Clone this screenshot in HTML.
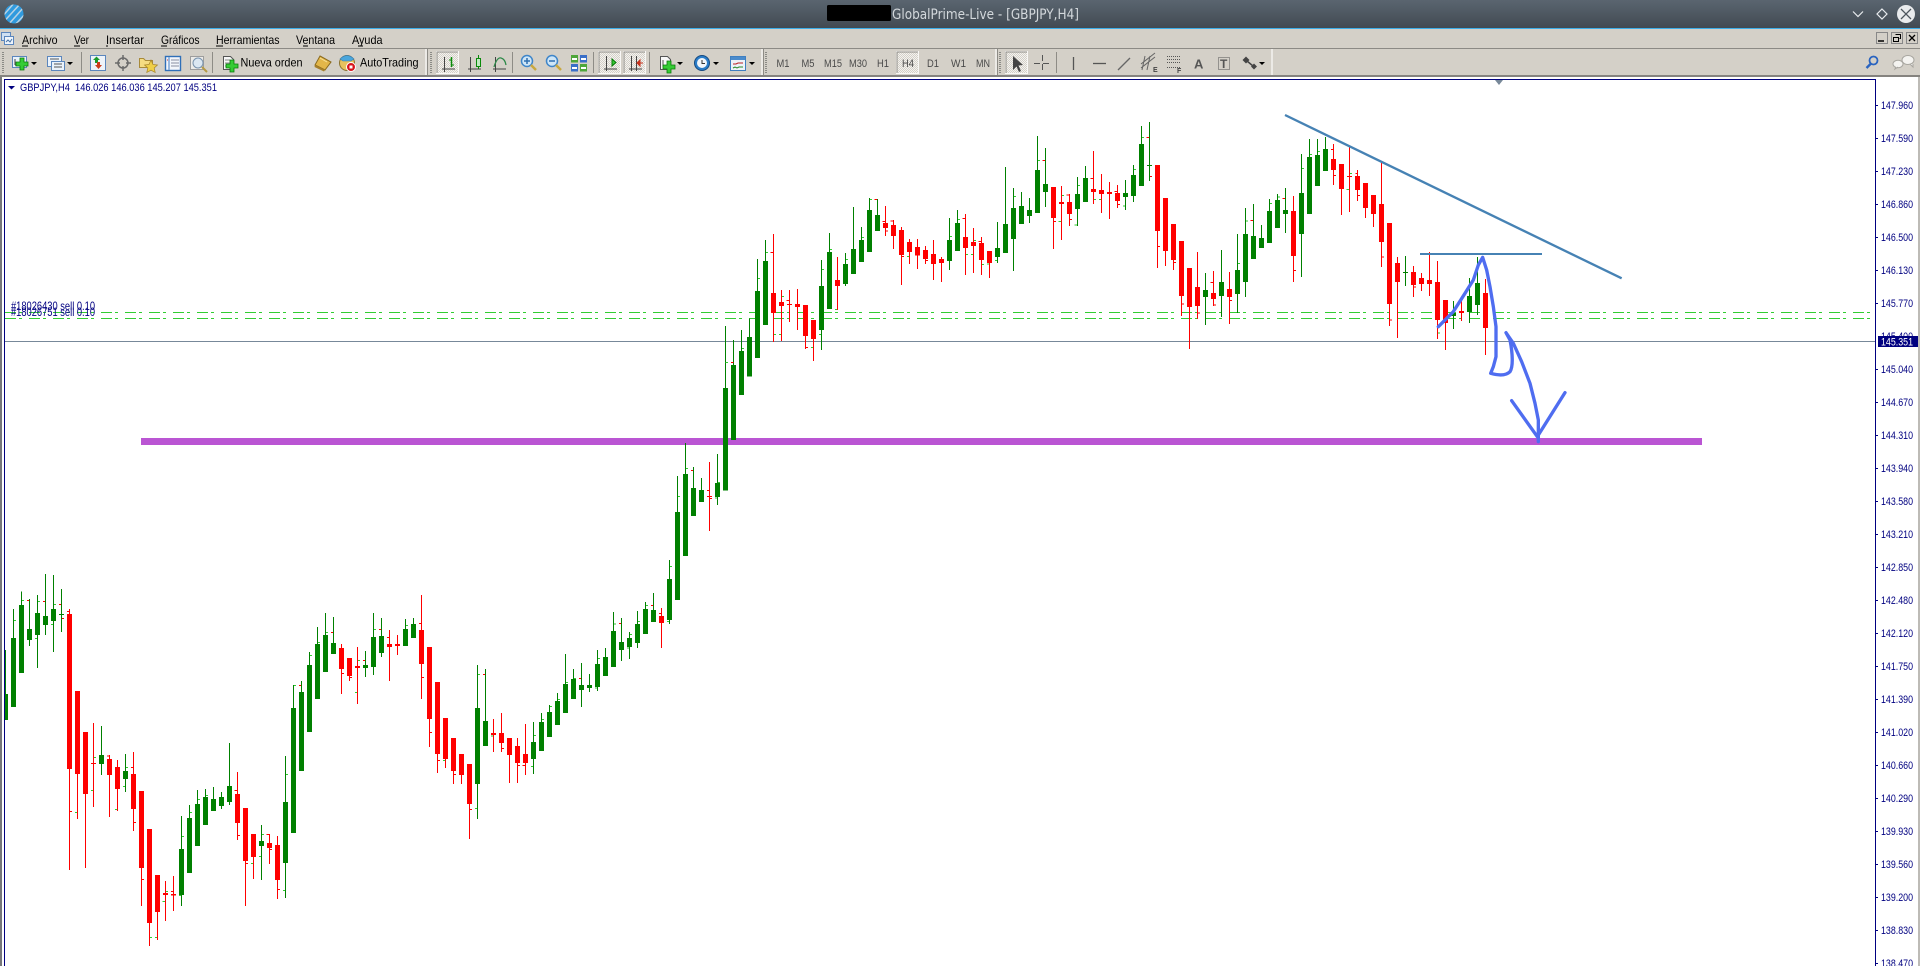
<!DOCTYPE html>
<html><head><meta charset="utf-8"><title>GlobalPrime-Live - [GBPJPY,H4]</title>
<style>
html,body{margin:0;padding:0;background:#fff;width:1920px;height:966px;overflow:hidden}
svg{display:block}
text{font-family:"Liberation Sans",sans-serif}
.m{font-size:12px;fill:#000}
.t{font-size:11px;fill:#4a4a4a}
.a{font-size:11px;fill:#000080}
.l{font-size:11px;fill:#000080}
.o{font-size:12px;fill:#000080}
</style></head><body>
<svg xmlns="http://www.w3.org/2000/svg" width="1920" height="966" viewBox="0 0 1920 966">
<defs>
<linearGradient id="tb" x1="0" y1="0" x2="0" y2="1"><stop offset="0" stop-color="#5a6570"/><stop offset="1" stop-color="#424a52"/></linearGradient>
<clipPath id="cc"><rect x="5" y="80" width="1870" height="886"/></clipPath>
<clipPath id="lg"><circle cx="14" cy="14" r="9.5"/></clipPath>
<path id="plus" d="M-2-6H2V-2H6V2H2V6H-2V2H-6V-2H-2Z" fill="#35cc35" stroke="#0b7a0b" stroke-width=".8"/>
<path id="dd" d="M-3 0H3L0 3Z" fill="#000"/>
<pattern id="dot" width="2" height="2" patternUnits="userSpaceOnUse"><rect width="2" height="2" fill="#f4f3f0"/><rect width="1" height="1" fill="#d4d0c8"/><rect x="1" y="1" width="1" height="1" fill="#d4d0c8"/></pattern>
</defs>

<!-- title bar -->
<rect width="1920" height="28" fill="url(#tb)"/>
<rect y="28" width="1920" height="1" fill="#3daee9"/>
<g clip-path="url(#lg)"><rect x="4" y="4" width="20" height="20" fill="#2f9ade"/>
<path d="M2 17L15 2M4.500 21L20 4M8 25L24 7M13 27L27 12" stroke="#b6d2e4" stroke-width="1.500" fill="none"/></g>
<rect x="827" y="5" width="64" height="16" rx="1.5" fill="#000"/>
<text x="892" y="19" font-size="14" fill="#d3d8dc" textLength="187" lengthAdjust="spacingAndGlyphs" style="font-family:'DejaVu Sans',sans-serif">GlobalPrime-Live - [GBPJPY,H4]</text>
<path d="M1853 11.5L1858 16.5L1863 11.5" stroke="#e8ebee" stroke-width="1.2" fill="none"/>
<path d="M1882 9L1887 14L1882 19L1877 14Z" stroke="#e8ebee" stroke-width="1.2" fill="none"/>
<circle cx="1906" cy="14" r="9" fill="#e9ebed"/>
<path d="M1901 9L1911 19M1911 9L1901 19" stroke="#4c555d" stroke-width="1.3"/>

<!-- menu -->
<rect y="29" width="1920" height="48" fill="#d4d0c8"/>
<g>
<rect x="1.500" y="32.500" width="9" height="8" fill="#cfe0f2" stroke="#5b86bd"/>
<rect x="4.500" y="36.500" width="9" height="8" fill="#eef4fb" stroke="#5b86bd"/>
<path d="M6 42l2-2 2 2 2-3" stroke="#4472a8" fill="none"/>
</g>
<text class="m" x="22" y="44" textLength="35.500" lengthAdjust="spacingAndGlyphs">Archivo</text>
<text class="m" x="74" y="44" textLength="15" lengthAdjust="spacingAndGlyphs">Ver</text>
<text class="m" x="106" y="44" textLength="38" lengthAdjust="spacingAndGlyphs">Insertar</text>
<text class="m" x="161" y="44" textLength="38.500" lengthAdjust="spacingAndGlyphs">Gráficos</text>
<text class="m" x="216" y="44" textLength="63.500" lengthAdjust="spacingAndGlyphs">Herramientas</text>
<text class="m" x="296" y="44" textLength="39" lengthAdjust="spacingAndGlyphs">Ventana</text>
<text class="m" x="352" y="44" textLength="30.500" lengthAdjust="spacingAndGlyphs">Ayuda</text>
<path d="M22 46h6M74 46h6M106 46h2M161 46h6M216 46h7M303 46h5M358 46h5" stroke="#000" stroke-width="1" fill="none"/>
<!-- mdi buttons -->
<g>
<rect x="1876.500" y="32.500" width="11" height="11" fill="#d4d0c8" stroke="#888"/><path d="M1878 41h6" stroke="#000" stroke-width="1.500"/>
<rect x="1891.500" y="32.500" width="11" height="11" fill="#d4d0c8" stroke="#888"/><path d="M1895.500 34.500h5v4h-1M1893.500 37.500h5v4h-5z" stroke="#000" fill="none"/>
<rect x="1906.500" y="32.500" width="11" height="11" fill="#d4d0c8" stroke="#888"/><path d="M1909 35l6 6M1915 35l-6 6" stroke="#000" stroke-width="1.300"/>
</g>

<!-- toolbar -->
<rect y="48" width="1920" height="1" fill="#8c8a85"/>
<rect y="75" width="1920" height="2" fill="#85837f"/>
<rect y="77" width="1920" height="2" fill="#fff"/>
<path d="M3 52V73" stroke="#8a8a85" stroke-width="2" stroke-dasharray="1 1"/>
<path d="M431 52V73M766 52V73M1000 52V73" stroke="#8a8a85" stroke-width="2" stroke-dasharray="1 1"/>
<path d="M426 49V75M762 49V75M996 49V75M1272 49V75" stroke="#f4f3f0" stroke-width="1.500"/>
<path d="M427.500 49V75M763.500 49V75M997.500 49V75" stroke="#8e8c86" stroke-width="1"/>
<path d="M81.500 52V73M212.500 52V73M512.500 52V73M593.500 52V73M649.500 52V73M1056.500 52V73" stroke="#8e8c86"/>

<!-- pressed buttons -->
<g fill="url(#dot)" stroke="#f9f8f6">
<rect x="436.500" y="51.500" width="22" height="22"/><rect x="598.500" y="51.500" width="22" height="22"/><rect x="623.500" y="51.500" width="22" height="22"/><rect x="896.500" y="51.500" width="22" height="22"/><rect x="1005.500" y="51.500" width="22" height="22"/>
</g>
<path d="M437 73V52H458M599 73V52H620M624 73V52H645M897 73V52H918M1006 73V52H1027" stroke="#8e8c86" fill="none"/>

<!-- icon: new chart -->
<rect x="12.500" y="56.500" width="14" height="11" fill="#eaf2fb" stroke="#5b86bd"/><path d="M15 59v6M15 65h7" stroke="#444"/><use href="#plus" x="22" y="64"/>
<use href="#dd" x="34" y="62"/>
<!-- profiles -->
<rect x="47.500" y="56.500" width="14" height="10" fill="#eaf2fb" stroke="#5b86bd"/><rect x="51.500" y="61.500" width="13" height="9" fill="#eaf2fb" stroke="#5b86bd"/><path d="M50 59h9M54 64h8M54 67h8" stroke="#555"/>
<use href="#dd" x="70" y="62"/>
<!-- market watch -->
<rect x="90.500" y="55.500" width="15" height="15" fill="#eef3f9" stroke="#5b86bd"/><path d="M93 60l3.500-3.500 3.500 3.500h-2v3h-3v-3z" fill="#1a9a2a"/><path d="M95 65l3.500 4 3.500-4h-2v-3h-3v3z" fill="#cc3a1a"/>
<!-- navigator crosshair -->
<circle cx="123" cy="63" r="5" fill="none" stroke="#6a6a6a" stroke-width="1.500"/><path d="M123 55v5M123 66v5M115 63h5M126 63h5" stroke="#6a6a6a" stroke-width="1.500"/>
<!-- favourites folder -->
<path d="M139.500 58.500v9h13v-7h-7l-2-2z" fill="#f5dc82" stroke="#a88a3a"/><path d="M151 60l2 4.500 4.500.5-3.300 3 1 4.500-4.200-2.300-4.200 2.300 1-4.500-3.300-3 4.500-.5z" fill="#efcf49" stroke="#a6842a" stroke-width=".7"/>
<!-- terminal -->
<rect x="165.500" y="56.500" width="15" height="14" fill="#f3f6fb" stroke="#2f6fb8" stroke-width="1.400"/><path d="M169 57v13" stroke="#7aa4d6" stroke-width="1.500"/><path d="M171 60h8M171 63h8M171 66h8" stroke="#8a8fa0"/><path d="M167 60h1" stroke="#c33"/>
<!-- tester -->
<rect x="190.500" y="56.500" width="13" height="13" fill="#ecebe8" stroke="#9d9d9d"/><circle cx="198" cy="63" r="5" fill="#dbe7f2" stroke="#7892ad"/><path d="M202 67l5 5" stroke="#b59a46" stroke-width="2"/>
<!-- nueva orden -->
<path d="M223.500 56.500h7l3 3v10h-10z" fill="#f8f8f8" stroke="#555"/><path d="M225 60h5M225 63h6M225 66h4" stroke="#888"/><use href="#plus" x="232" y="66"/>
<text x="240.500" y="66.500" font-size="12" fill="#000" textLength="62" lengthAdjust="spacingAndGlyphs">Nueva orden</text>
<!-- metaeditor -->
<path d="M320 56L331 62L325 70L315 65Z" fill="#e3b649" stroke="#8a6a1e"/><path d="M315 65L325 70L324 71.500L314.500 67Z" fill="#a77f2a"/><path d="M320 58L327 62" stroke="#f7e19a"/>
<!-- autotrading -->
<circle cx="347" cy="63" r="7.500" fill="#e8c25d" stroke="#8b7330"/><path d="M340 59q7-7 14 0l-3 2h-8z" fill="#4aa6dc" stroke="#3a7fb0" stroke-width=".6"/><circle cx="351" cy="67" r="4.500" fill="#d8141c" stroke="#fff"/><rect x="349.500" y="65.500" width="3" height="3" fill="#fff"/>
<text x="360" y="66.500" font-size="12" fill="#000" textLength="58.500" lengthAdjust="spacingAndGlyphs">AutoTrading</text>

<!-- chart type icons -->
<g stroke="#444" fill="none">
<path d="M442 69h13M444.500 57v15"/>
<path d="M451.500 57v10" stroke="#0a8a0a" stroke-width="1.500"/><path d="M449 60h3M451 65h3" stroke="#0a8a0a"/>
<path d="M468 69h13M470.500 57v15"/>
<path d="M478.500 55v4M478.500 66v3" stroke="#0a8a0a"/><rect x="476.500" y="58.500" width="4" height="8" fill="#bfe9bf" stroke="#0a8a0a"/>
<path d="M493 69h13M495.500 57v15"/>
<path d="M494 67q3-10 7-9t5 7" stroke="#2f8a4a" stroke-width="1.300"/>
<path d="M604 69h13M606.500 56v15"/><path d="M612 59v7l4-3.500z" fill="#34c934" stroke="#0a7a0a"/>
<path d="M629 69h13M631.500 56v15M636.500 56v15"/><path d="M643 63h-3M640 60l-3 3 3 3z" fill="#c8321c" stroke="#c8321c"/>
</g>
<!-- zoom icons -->
<g>
<circle cx="527" cy="61" r="5.500" fill="#cfe6f7" stroke="#3e85c9" stroke-width="1.500"/><path d="M524 61h6M527 58v6" stroke="#2e6fb0" stroke-width="1.500"/><path d="M531 65l5 5" stroke="#c9a83f" stroke-width="2.500"/>
<circle cx="552" cy="61" r="5.500" fill="#cfe6f7" stroke="#3e85c9" stroke-width="1.500"/><path d="M549 61h6" stroke="#2e6fb0" stroke-width="1.500"/><path d="M556 65l5 5" stroke="#c9a83f" stroke-width="2.500"/>
<rect x="571" y="55" width="7" height="7.500" fill="#4ea63a"/><rect x="580" y="55" width="7" height="7.500" fill="#3a6fc8"/><rect x="571" y="64" width="7" height="7.500" fill="#3a6fc8"/><rect x="580" y="64" width="7" height="7.500" fill="#4ea63a"/>
<path d="M572 59h5M581 59h5M572 68h5M581 68h5" stroke="#fff" stroke-width="2"/>
</g>
<!-- indicators / clock / templates -->
<path d="M660.500 56.500h7l3 3v10h-10z" fill="#f8f8f8" stroke="#555"/><path d="M663 60v6h5" stroke="#555" fill="none"/><use href="#plus" x="669" y="67"/><use href="#dd" x="680" y="62"/>
<circle cx="702" cy="63" r="7.500" fill="#2a7cc8" stroke="#164a80"/><circle cx="702" cy="63" r="5" fill="#f2f6fa"/><path d="M702 60v3.500h3" stroke="#333" fill="none"/><use href="#dd" x="716" y="62"/>
<rect x="730.500" y="56.500" width="15" height="14" fill="#eef3f9" stroke="#3f7fc0"/><rect x="731" y="57" width="14" height="3" fill="#4a8bcc"/><path d="M733 64h3l2-1h5" stroke="#b22" fill="none"/><path d="M733 68l2-1 2 1 2-1h4" stroke="#2a8a2a" fill="none"/><use href="#dd" x="752" y="62"/>

<!-- timeframes -->
<text class="t" x="776.500" y="67" textLength="13" lengthAdjust="spacingAndGlyphs">M1</text>
<text class="t" x="801.500" y="67" textLength="13" lengthAdjust="spacingAndGlyphs">M5</text>
<text class="t" x="824" y="67" textLength="18" lengthAdjust="spacingAndGlyphs">M15</text>
<text class="t" x="849" y="67" textLength="18" lengthAdjust="spacingAndGlyphs">M30</text>
<text class="t" x="877" y="67" textLength="12" lengthAdjust="spacingAndGlyphs">H1</text>
<text class="t" x="902" y="67" textLength="12" lengthAdjust="spacingAndGlyphs">H4</text>
<text class="t" x="927" y="67" textLength="12" lengthAdjust="spacingAndGlyphs">D1</text>
<text class="t" x="951" y="67" textLength="15" lengthAdjust="spacingAndGlyphs">W1</text>
<text class="t" x="976" y="67" textLength="14" lengthAdjust="spacingAndGlyphs">MN</text>

<!-- drawing tools -->
<path d="M1013 56L1013 70L1016.500 66.500L1019 72L1021 71L1018.500 65.500L1023 65Z" fill="#444"/>
<path d="M1042.500 55v16M1034 63.500h17" stroke="#555" stroke-dasharray="6 3"/>
<path d="M1073.500 57v13" stroke="#555" stroke-width="1.300"/>
<path d="M1093 63.500h13" stroke="#555" stroke-width="1.300"/>
<path d="M1118 70L1130 58" stroke="#666" stroke-width="1.300"/>
<path d="M1141 68l14-11M1141 64l14-11M1145 56l-3 14M1150 56l-3 14" stroke="#666" fill="none"/>
<text x="1153" y="72" font-size="7" font-weight="bold" fill="#444">E</text>
<path d="M1167 56.500h13M1167 59.500h13M1167 62.500h13M1167 67.500h13" stroke="#555" stroke-dasharray="1 1"/>
<text x="1177" y="73" font-size="7" font-weight="bold" fill="#444">F</text>
<text x="1194" y="68.500" font-size="13" font-weight="bold" fill="#555">A</text>
<rect x="1218.500" y="57.500" width="11" height="12" fill="none" stroke="#555" stroke-dasharray="1 1"/>
<text x="1220" y="68" font-size="12" font-weight="bold" fill="#555">T</text>
<path d="M1242.500 60l3.500-3.500 3.500 3.500-3.500 3.500zM1251 66.500l3-3 3 3-3 3z" fill="#444"/><path d="M1247 61l6 5" stroke="#444" stroke-width="1.500"/>
<use href="#dd" x="1262" y="62"/>
<!-- search / chat -->
<circle cx="1873.500" cy="60.500" r="4" fill="none" stroke="#2a64c0" stroke-width="1.800"/><path d="M1870.500 64l-4 4" stroke="#2a64c0" stroke-width="2.400"/>
<ellipse cx="1908" cy="60" rx="6" ry="4.500" fill="#f4f3f0" stroke="#a8a6a0"/><ellipse cx="1898" cy="64" rx="5" ry="3.800" fill="#f4f3f0" stroke="#a8a6a0"/><path d="M1910 64l3 3v-3M1896 67l-1 2 3-2" fill="#f4f3f0" stroke="#a8a6a0"/>

<!-- chart frame -->
<rect x="0" y="77" width="2" height="889" fill="#77777a"/>
<rect x="1918" y="77" width="2" height="889" fill="#bdbbb6"/>
<rect x="4" y="79" width="1" height="887" fill="#000080"/>
<rect x="4" y="79" width="1872" height="1" fill="#000080"/>
<rect x="1875" y="79" width="1" height="887" fill="#000080"/>
<path d="M1495 80h8l-4 5z" fill="#778899"/>
<path d="M8 86h7l-3.500 3.500z" fill="#000080"/>
<text class="l" x="20" y="91" textLength="197" lengthAdjust="spacingAndGlyphs" xml:space="preserve">GBPJPY,H4  146.026 146.036 145.207 145.351</text>

<g clip-path="url(#cc)">
<!-- horizontal lines -->
<path d="M5 312.500H1875M5 318.500H1875" stroke="#32cd32" stroke-width="1" stroke-dasharray="11 3 3 7" shape-rendering="crispEdges"/>
<path d="M5 341.500H1875" stroke="#778899" stroke-width="1" shape-rendering="crispEdges"/>
<rect x="141" y="438" width="1561" height="7" fill="#ba55d3"/>

<!-- candles A -->
<g transform="translate(0 560) scale(.33333)" fill="none" shape-rendering="crispEdges">
<path stroke="#32cd32" stroke-width="3" d="M64 121h8M40 181h8M112 124h8M105 235h7M160 133h8M153 193h7M280 592h8M273 691h7M376 622h8M369 679h7M345 748h7M225 757h7M496 994h8M488 1024h8M448 1132h8M465 1132h7M544 829h8M568 757h8M592 718h8M616 706h8M537 1006h7M856 643h8M849 991h7M880 376h8M976 217h8M952 247h8M928 286h8M1072 301h8M1065 397h7M1120 208h8M1216 196h8M784 823h8M777 889h7M753 910h7M1329 601h7M1432 343h8M1425 745h7"/>
<path stroke="#f00" stroke-width="3" d="M81 121h7M129 124h7M177 133h7M184 175h8M201 154h7M208 754h8M321 588h7M393 622h7M400 787h8M424 958h8M704 691h8M712 826h8M736 910h8M800 823h8M808 868h8M832 988h8M1024 340h8M1048 352h8M1089 301h7M993 217h7M897 376h7M1137 208h7M1161 232h7M1257 190h7M1264 352h8M1288 517h8M1312 601h8M1360 643h8M1408 748h8M513 994h7"/>
<path stroke="#008000" stroke-width="3" d="M16.500 270V480M40.500 147V441M64.500 94V339M88.500 117V258M112.500 105V324M136.500 42V225M160.500 45V276M184.500 87V216M304.500 498V645M376.500 582V696M544.500 768V1038M568.500 735V939M592.500 690V858M616.500 687V795M640.500 681V753M664.500 696V747M688.500 549V735M784.500 795V960M856.500 588V1014M880.500 375V819M904.500 363V633M928.500 276V516M952.500 201V417M976.500 159V336M1000.500 171V282M1096.500 273V351M1120.500 159V345M1144.500 174V291M1216.500 177V258M1240.500 174V234M1432.500 315V777"/>
<path stroke="#008000" stroke-width="15" d="M16.500 402V480M40.500 234V441M64.500 135V339M88.500 207V240M112.500 159V225M136.500 168V195M160.500 147V183M184.500 162V165M304.500 585V612M376.500 633V657M544.500 867V1005M568.500 774V939M592.500 732V858M616.500 711V795M640.500 717V753M664.500 711V738M688.500 678V726M784.500 843V858M856.500 726V909M880.500 444V819M904.500 396V633M928.500 315V516M952.500 252V417M976.500 225V336M1000.500 249V282M1096.500 315V324M1120.500 231V321M1144.500 228V279M1216.500 207V258M1240.500 192V234M1432.500 444V672"/>
<path stroke="#f00" stroke-width="3" d="M208.500 147V930M232.500 393V777M256.500 516V924M280.500 489V741M328.500 585V771M352.500 600V753M400.500 576V813M424.500 693V1038M448.500 807V1158M472.500 945V1140M496.500 963V1083M520.500 948V1053M712.500 636V840M736.500 744V1038M760.500 822V957M808.500 822V912M832.500 828V1017M1024.500 252V402M1048.500 294V363M1072.500 261V432M1168.500 210V363M1192.500 225V285M1264.500 105V417M1288.500 261V561M1312.500 366V639M1336.500 474V624M1360.500 534V672M1384.500 582V672M1408.500 612V837"/>
<path stroke="#f00" stroke-width="15" d="M208.500 162V627M232.500 393V642M256.500 516V702M280.500 609V612M328.500 597V645M352.500 621V687M400.500 642V747M424.500 693V924M448.500 807V1089M472.500 945V1056M496.500 999V1005M520.500 1002V1007M712.500 702V789M736.500 744V903M760.500 822V891M808.500 849V864M832.500 855V960M1024.500 264V327M1048.500 294V348M1072.500 318V324M1168.500 252V261M1192.500 252V258M1264.500 210V312M1288.500 261V477M1312.500 366V582M1336.500 474V597M1360.500 534V633M1384.500 582V645M1408.500 612V732"/>
</g>

<!-- candles B -->
<g transform="translate(440 420) scale(.33333)" fill="none" shape-rendering="crispEdges">
<path stroke="#32cd32" stroke-width="3" d="M153 948h7M280 946h8M304 898h8M328 859h8M352 838h8M376 787h8M400 775h8M465 804h7M472 715h8M520 612h8M561 684h7M568 643h8M592 604h8M616 556h8M681 604h7M688 439h8M712 229h8M736 145h8M825 234h7M832 187h8M273 1039h7"/>
<path stroke="#f00" stroke-width="3" d="M129 763h7M184 985h8M417 775h7M537 610h7M633 556h7M657 580h7M753 151h7M801 211h7M808 235h8M232 1036h8M248 1036h8"/>
<path stroke="#008000" stroke-width="3" d="M136.500 747V978M280.500 906V1062M304.500 879V993M328.500 855V951M352.500 819V915M376.500 702V879M400.500 747V837M424.500 729V861M448.500 762V816M472.500 690V813M496.500 684V768M520.500 576V741M544.500 594V723M568.500 636V717M592.500 573V684M616.500 546V642M640.500 519V606M688.500 420V612M712.500 168V540M736.500 69V408M760.500 141V288M784.500 174V246M832.500 102V255M856.500 -282V212M880.500 -240V60"/>
<path stroke="#008000" stroke-width="15" d="M136.500 903V978M280.500 966V1017M304.500 906V993M328.500 876V951M352.500 843V915M376.500 792V879M400.500 777V837M424.500 795V810M448.500 795V804M472.500 732V801M496.500 711V768M520.500 633V741M544.500 666V690M568.500 654V681M592.500 612V669M616.500 567V642M640.500 570V606M688.500 477V600M712.500 276V540M736.500 162V408M760.500 204V288M784.500 210V246M832.500 189V231M856.500 -96V212M880.500 -165V60"/>
<path stroke="#f00" stroke-width="3" d="M160.500 897V996M184.500 879V996M208.500 954V1089M232.500 954V1089M256.500 912V1065M664.500 564V684M808.500 126V333"/>
<path stroke="#f00" stroke-width="15" d="M160.500 939V945M184.500 939V969M208.500 954V1005M232.500 978V1029M256.500 1002V1029M664.500 588V609M808.500 228V231"/>
</g>

<!-- candles C -->
<g transform="translate(720 120) scale(.33333)" fill="none" shape-rendering="crispEdges">
<path stroke="#32cd32" stroke-width="3" d="M16 727h8M64 685h8M112 475h8M136 397h8M184 529h8M304 448h8M297 643h7M328 388h8M376 418h8M345 568h7M424 352h8M448 238h8M712 298h8M688 349h8M736 403h8M753 403h7M760 361h8M784 433h8M801 432h7M825 421h7M880 229h8M952 121h8M1024 226h8M1072 196h8M1016 304h8M1064 315h8M1120 238h8M1137 238h7M1240 148h8M1209 258h7M1264 52h8M273 682h7M160 643h8M177 643h7M561 409h7"/>
<path stroke="#f00" stroke-width="3" d="M33 727h7M152 397h8M200 541h8M256 682h8M464 238h8M488 304h8M496 333h8M512 303h8M544 409h8M616 421h8M728 295h8M776 364h8M968 121h8M1112 175h8M1184 214h8M1192 253h8M1048 298h8M1040 225h8M1000 304h8M1280 52h8M1288 169h8M1312 379h8M1360 427h8M1384 552h8"/>
<path stroke="#008000" stroke-width="3" d="M64.500 630V825M88.500 595V770M112.500 417V714M136.500 360V615M304.500 420V690M328.500 339V567M376.500 399V498M400.500 261V462M424.500 321V426M448.500 234V396M472.500 237V333M688.500 294V450M712.500 270V393M832.500 306V429M856.500 141V399M880.500 204V453M904.500 216V312M928.500 234V309M952.500 48V279M976.500 84V261M1072.500 171V318M1096.500 138V246M1216.500 180V270M1240.500 135V246M1264.500 18V198M1288.500 6V183"/>
<path stroke="#008000" stroke-width="15" d="M64.500 693V825M88.500 651V770M112.500 513V714M136.500 423V615M304.500 498V630M328.500 396V567M376.500 432V492M400.500 387V462M424.500 360V426M448.500 270V396M472.500 285V333M688.500 360V423M712.500 309V393M832.500 384V411M856.500 312V399M880.500 264V357M904.500 258V312M928.500 270V288M952.500 150V279M976.500 192V216M1072.500 222V267M1096.500 174V246M1216.500 219V231M1240.500 165V228M1264.500 72V198M1288.500 135V138"/>
<path stroke="#f00" stroke-width="3" d="M160.500 342V666M184.500 510V663M208.500 510V606M232.500 507V630M256.500 555V687M280.500 600V723M352.500 411V570M496.500 258V348M520.500 300V387M544.500 321V495M568.500 357V432M592.500 357V447M616.500 378V432M640.500 360V480M664.500 411V486M736.500 282V465M760.500 324V459M784.500 351V465M808.500 393V474M1000.500 201V387M1024.500 198V360M1048.500 222V318M1120.500 93V252M1144.500 162V279M1168.500 186V297M1192.500 195V264M1312.500 135V444M1336.500 234V438M1360.500 312V450M1384.500 363V588M1408.500 444V687M1432.500 396V597"/>
<path stroke="#f00" stroke-width="15" d="M160.500 519V579M184.500 546V558M208.500 552V555M232.500 552V561M256.500 555V648M280.500 600V657M352.500 480V498M496.500 309V324M520.500 315V348M544.500 330V405M568.500 366V396M592.500 381V406M616.500 390V417M640.500 402V432M664.500 417V429M736.500 351V384M760.500 366V378M784.500 369V420M808.500 393V429M1000.500 201V294M1024.500 246V252M1048.500 246V282M1120.500 207V216M1144.500 210V222M1168.500 216V222M1192.500 219V243M1312.500 135V333M1336.500 234V393M1360.500 312V420M1384.500 363V528M1408.500 444V561M1432.500 501V558"/>
</g>

<!-- candles D -->
<g transform="translate(1180 110) scale(.33333)" fill="none" shape-rendering="crispEdges">
<path stroke="#32cd32" stroke-width="3" d="M172 461h8M196 333h8M268 280h8M292 261h8M364 175h8M388 133h8M412 124h8M508 190h8M500 238h8M772 669h8"/>
<path stroke="#f00" stroke-width="3" d="M52 609h8M92 517h8M100 585h8M148 571h8M212 331h8M308 265h8M340 481h8M453 118h7M460 196h8M526 190h6M532 256h8M604 441h8M628 630h8M700 531h8"/>
<path stroke="#008000" stroke-width="3" d="M76.500 489V645M124.500 420V621M172.500 372V609M196.500 294V561M220.500 282V447M244.500 345V414M268.500 267V399M292.500 252V354M316.500 234V369M364.500 132V501M388.500 87V312M412.500 87V228M436.500 81V183M676.500 438V528M820.500 573V657M868.500 504V639M892.500 441V615"/>
<path stroke="#008000" stroke-width="15" d="M76.500 540V561M124.500 516V558M172.500 480V552M196.500 372V516M220.500 378V447M244.500 384V414M268.500 303V399M292.500 270V354M316.500 300V312M364.500 249V372M388.500 141V312M412.500 135V228M436.500 117V183M676.500 486V489M820.500 609V618M868.500 558V606M892.500 519V585"/>
<path stroke="#f00" stroke-width="3" d="M28.500 474V717M100.500 483V588M148.500 486V642M340.500 258V516M460.500 102V225M484.500 162V315M508.500 111V306M532.500 180V273M556.500 219V324M580.500 255V351M604.500 156V471M628.500 339V648M652.500 441V684M700.500 468V561M724.500 489V543M748.500 426V558M772.500 453V687M796.500 570V720M844.500 570V633M916.500 507V735"/>
<path stroke="#f00" stroke-width="15" d="M100.500 549V567M148.500 537V561M340.500 303V438M460.500 147V180M484.500 162V237M508.500 198V201M532.500 198V240M556.500 219V294M580.500 255V312M604.500 282V396M628.500 339V582M652.500 459V516M700.500 486V525M724.500 504V522M748.500 510V522M772.500 516V630M796.500 570V639M844.500 603V609M916.500 549V654"/>
<!-- trend lines and hand drawing -->
<path d="M315 15L1325 505" stroke="#4682b4" stroke-width="7" fill="none" shape-rendering="auto"/>
<path d="M720 432H1086" stroke="#4682b4" stroke-width="6" fill="none"/>
<path d="M775 650L820 605L855 550L880 510L895 465L908 442L920 480L930 530L940 590L948 650L948 740L940 770L932 790C950 795 975 800 990 785C1000 770 998 730 990 690L978 668L1000 700L1025 755L1050 820L1065 880L1075 930L1075 995M995 872L1072 980L1155 848" stroke="#4f6df0" stroke-width="10" fill="none" stroke-linejoin="round" stroke-linecap="round" shape-rendering="auto"/>
</g>

<!-- order labels -->
<text class="o" x="11" y="310" textLength="84" lengthAdjust="spacingAndGlyphs">#18026430 sell 0.10</text>
<text class="o" x="11" y="316" textLength="84" lengthAdjust="spacingAndGlyphs">#18026751 sell 0.10</text>
</g>

<!-- axis -->
<path d="M1875 105.500h3M1875 138.500h3M1875 171.500h3M1875 204.500h3M1875 237.500h3M1875 270.500h3M1875 303.500h3M1875 369.500h3M1875 402.500h3M1875 435.500h3M1875 468.500h3M1875 501.500h3M1875 534.500h3M1875 567.500h3M1875 600.500h3M1875 633.500h3M1875 666.500h3M1875 699.500h3M1875 732.500h3M1875 765.500h3M1875 798.500h3M1875 831.500h3M1875 864.500h3M1875 897.500h3M1875 930.500h3M1875 963.500h3" stroke="#000080"/>
<g>
<text class="a" x="1881" y="109" textLength="32" lengthAdjust="spacingAndGlyphs">147.960</text>
<text class="a" x="1881" y="142" textLength="32" lengthAdjust="spacingAndGlyphs">147.590</text>
<text class="a" x="1881" y="175" textLength="32" lengthAdjust="spacingAndGlyphs">147.230</text>
<text class="a" x="1881" y="208" textLength="32" lengthAdjust="spacingAndGlyphs">146.860</text>
<text class="a" x="1881" y="241" textLength="32" lengthAdjust="spacingAndGlyphs">146.500</text>
<text class="a" x="1881" y="274" textLength="32" lengthAdjust="spacingAndGlyphs">146.130</text>
<text class="a" x="1881" y="307" textLength="32" lengthAdjust="spacingAndGlyphs">145.770</text>
<text class="a" x="1881" y="340" textLength="32" lengthAdjust="spacingAndGlyphs">145.400</text>
<text class="a" x="1881" y="373" textLength="32" lengthAdjust="spacingAndGlyphs">145.040</text>
<text class="a" x="1881" y="406" textLength="32" lengthAdjust="spacingAndGlyphs">144.670</text>
<text class="a" x="1881" y="439" textLength="32" lengthAdjust="spacingAndGlyphs">144.310</text>
<text class="a" x="1881" y="472" textLength="32" lengthAdjust="spacingAndGlyphs">143.940</text>
<text class="a" x="1881" y="505" textLength="32" lengthAdjust="spacingAndGlyphs">143.580</text>
<text class="a" x="1881" y="538" textLength="32" lengthAdjust="spacingAndGlyphs">143.210</text>
<text class="a" x="1881" y="571" textLength="32" lengthAdjust="spacingAndGlyphs">142.850</text>
<text class="a" x="1881" y="604" textLength="32" lengthAdjust="spacingAndGlyphs">142.480</text>
<text class="a" x="1881" y="637" textLength="32" lengthAdjust="spacingAndGlyphs">142.120</text>
<text class="a" x="1881" y="670" textLength="32" lengthAdjust="spacingAndGlyphs">141.750</text>
<text class="a" x="1881" y="703" textLength="32" lengthAdjust="spacingAndGlyphs">141.390</text>
<text class="a" x="1881" y="736" textLength="32" lengthAdjust="spacingAndGlyphs">141.020</text>
<text class="a" x="1881" y="769" textLength="32" lengthAdjust="spacingAndGlyphs">140.660</text>
<text class="a" x="1881" y="802" textLength="32" lengthAdjust="spacingAndGlyphs">140.290</text>
<text class="a" x="1881" y="835" textLength="32" lengthAdjust="spacingAndGlyphs">139.930</text>
<text class="a" x="1881" y="868" textLength="32" lengthAdjust="spacingAndGlyphs">139.560</text>
<text class="a" x="1881" y="901" textLength="32" lengthAdjust="spacingAndGlyphs">139.200</text>
<text class="a" x="1881" y="934" textLength="32" lengthAdjust="spacingAndGlyphs">138.830</text>
<text class="a" x="1881" y="967" textLength="32" lengthAdjust="spacingAndGlyphs">138.470</text>
</g>
<rect x="1878" y="336" width="40" height="11" fill="#000080"/>
<text x="1881" y="345.500" font-size="11" fill="#fff" textLength="32" lengthAdjust="spacingAndGlyphs">145.351</text>
</svg>
</body></html>
